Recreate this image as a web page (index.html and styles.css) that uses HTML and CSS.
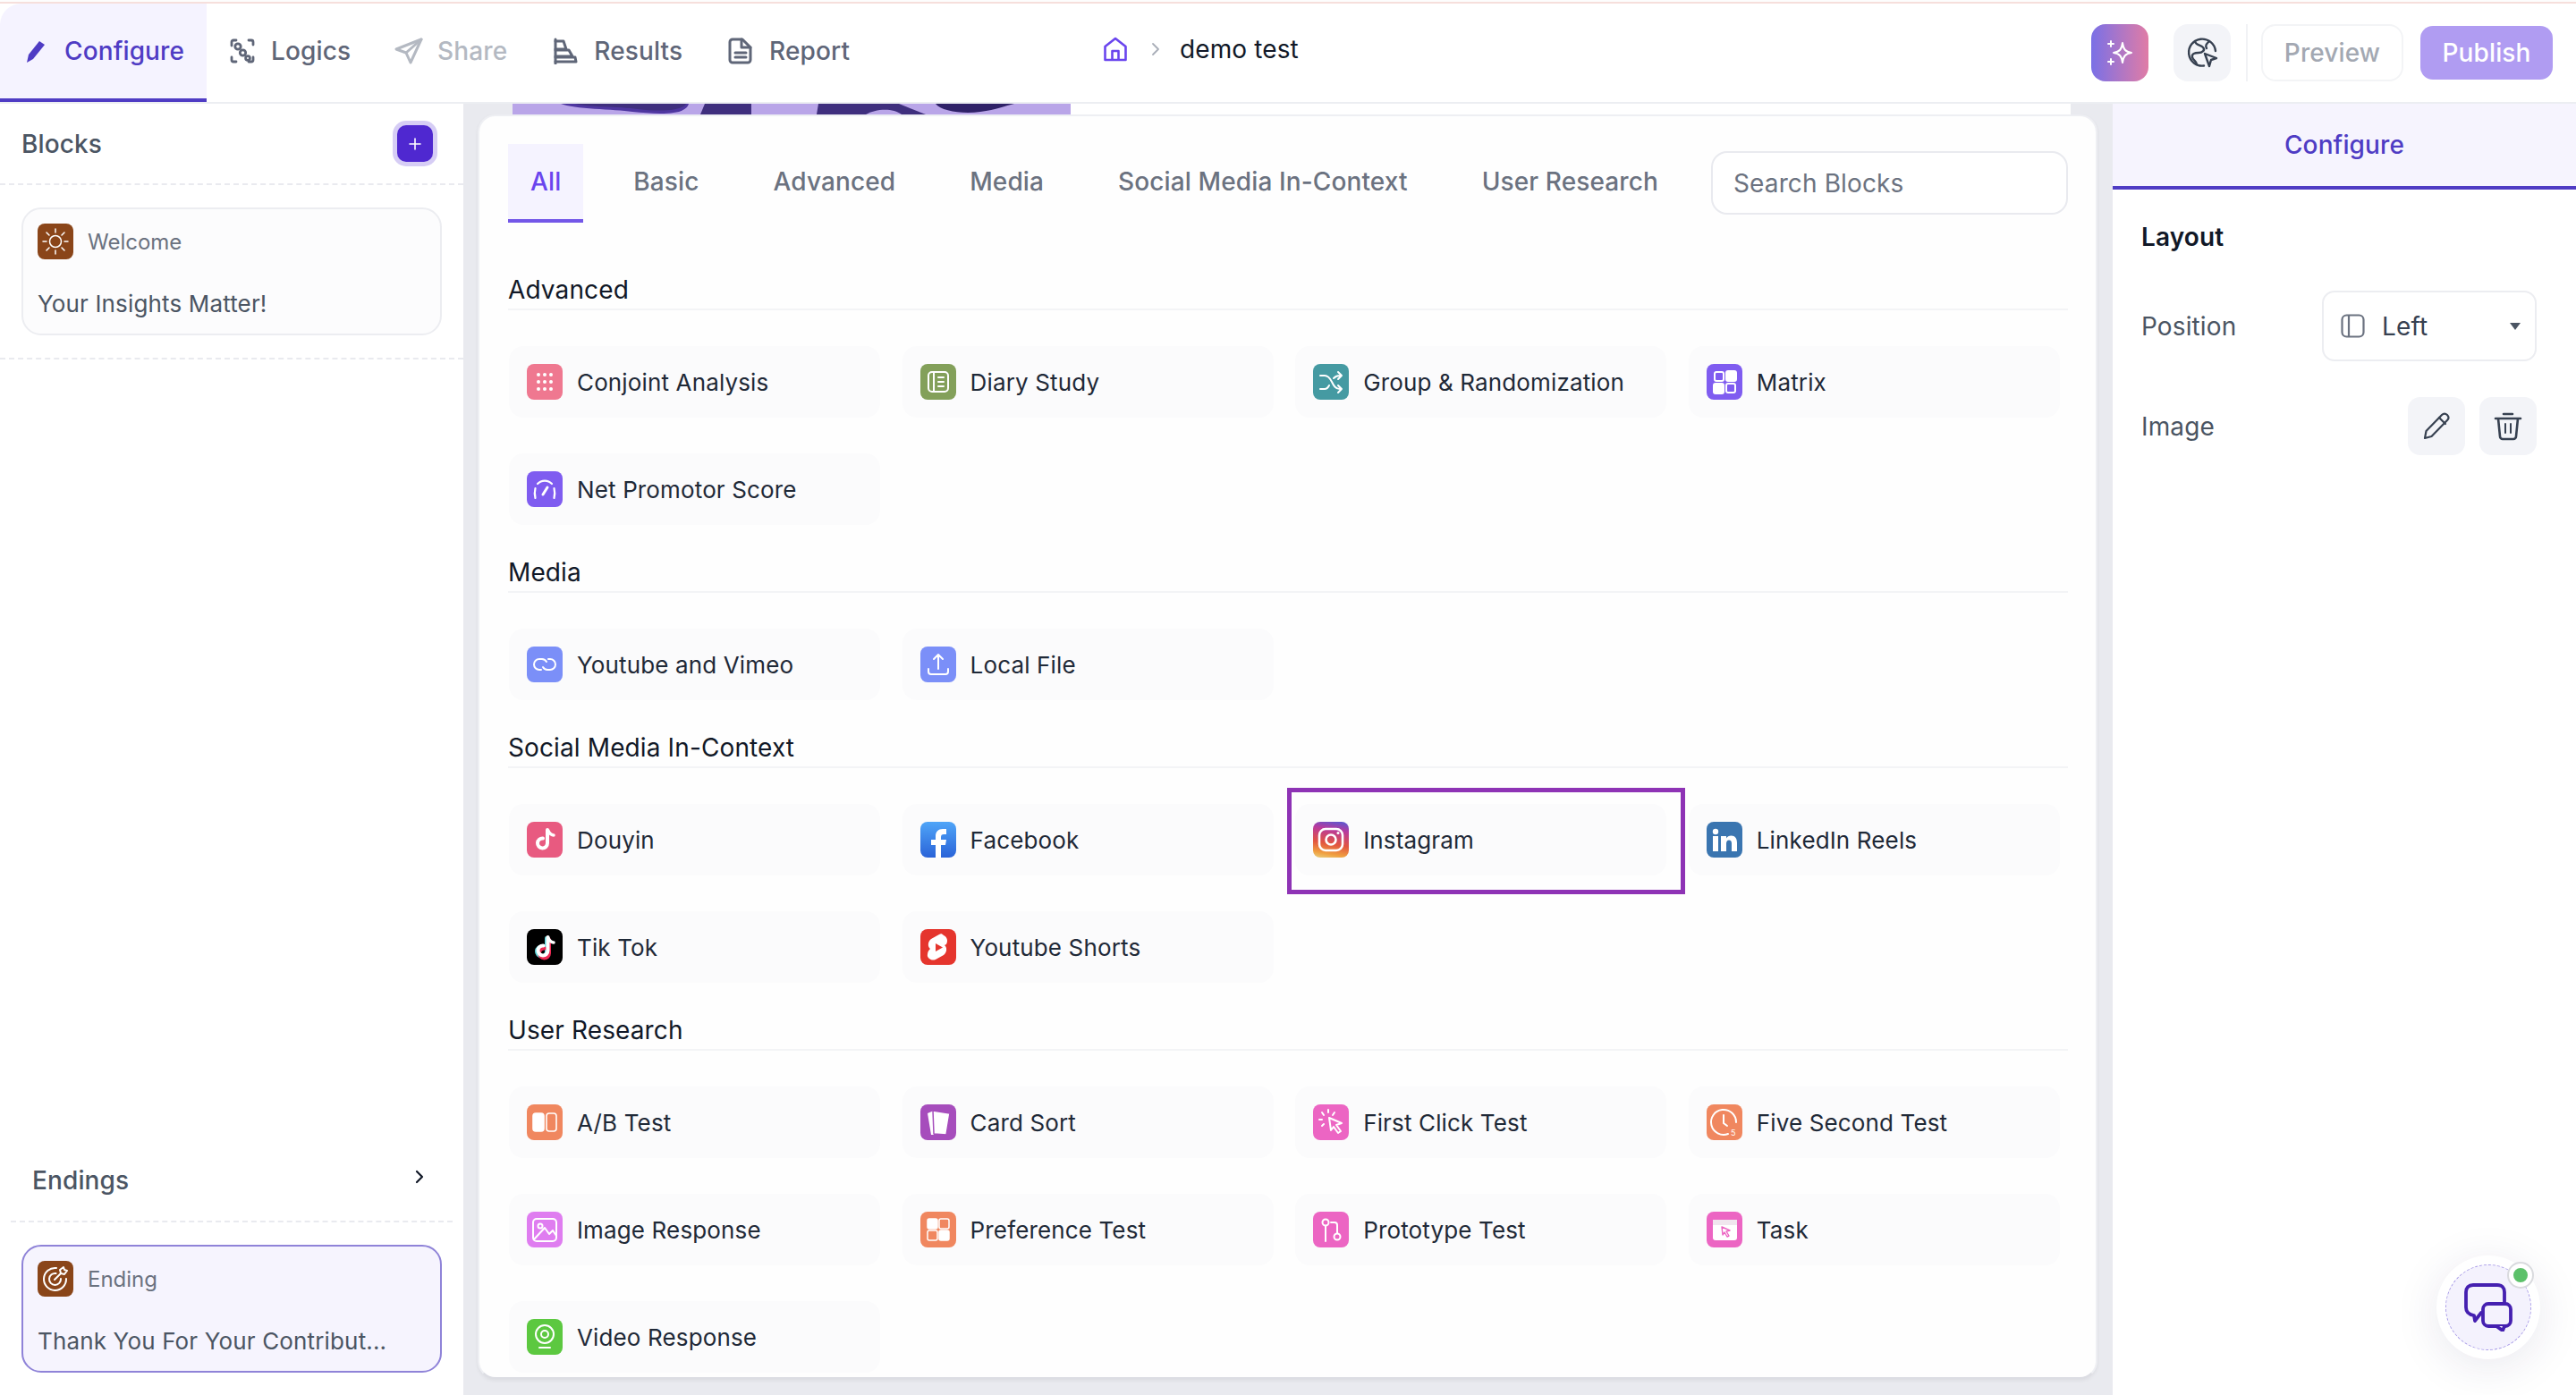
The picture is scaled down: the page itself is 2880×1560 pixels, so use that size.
FILE: index.html
```html
<!DOCTYPE html>
<html lang="en">
<head>
<meta charset="utf-8">
<title>demo test</title>
<link rel="stylesheet" href="styles.css">
</head>
<body>
<div class="app">
  <div class="topline"></div>
  <header class="header">
    <nav class="nav">
      <a class="nav-tab active"><svg class="nav-ic" viewBox="0 0 28 28"><path d="M3 27l2-9L17 3l6 4L10 23z" fill="#4f3cc4"/></svg>Configure</a>
      <a class="nav-tab"><svg class="nav-ic" viewBox="0 0 28 28" fill="none" stroke="#5f6678" stroke-width="2.800" stroke-linecap="round" stroke-linejoin="round"><path d="M2 8V4a2 2 0 0 1 2-2h3M21 2h3a2 2 0 0 1 2 2v3M26 21v3a2 2 0 0 1-2 2h-3M7 26H4a2 2 0 0 1-2-2v-3"/><circle cx="9" cy="9" r="3.200"/><circle cx="14.500" cy="16" r="3.200"/><circle cx="20" cy="22" r="2.400"/></svg>Logics</a>
      <a class="nav-tab disabled"><svg class="nav-ic wide" viewBox="0 0 32 30" fill="none" stroke="#b4b9c2" stroke-width="3" stroke-linejoin="round" stroke-linecap="round"><path d="M30 2L2 13l11 4 5 11z"/><path d="M30 2L13 17"/></svg>Share</a>
      <a class="nav-tab"><svg class="nav-ic" viewBox="0 0 28 30" fill="none" stroke="#5f6678" stroke-width="3" stroke-linejoin="round" stroke-linecap="round"><path d="M3 2v27"/><path d="M3 4h9l3 9H3M3 14h15l4 7H3M3 22h22l1 5H3"/></svg>Results</a>
      <a class="nav-tab"><svg class="nav-ic" viewBox="0 0 28 30" fill="none" stroke="#5f6678" stroke-width="3" stroke-linejoin="round" stroke-linecap="round"><path d="M5 2h11l9 9v14a3 3 0 0 1-3 3H5a3 3 0 0 1-3-3V5a3 3 0 0 1 3-3z"/><path d="M15 2v9h10M8 17h12M8 22h12"/></svg>Report</a>
    </nav>
    <div class="crumb">
      <svg class="home" viewBox="0 0 28 28" fill="none" stroke="#6a45ee" stroke-width="2.600" stroke-linejoin="round"><path d="M2.500 26V11L14 2l11.500 9v15z"/><path d="M10.500 26V16h7v10"/></svg>
      <svg class="crumb-sep" viewBox="0 0 10 16" fill="none" stroke="#a9aeb8" stroke-width="1.800" stroke-linecap="round" stroke-linejoin="round"><path d="M2 2l6 6-6 6"/></svg>
      <span class="crumb-text">demo test</span>
    </div>
    <div class="actions">
      <button class="icon-btn ai"><svg viewBox="0 0 32 32" width="32" height="32" fill="none" stroke="#fff" stroke-width="2" stroke-linejoin="round" stroke-linecap="round"><path d="M19 5c1 7 3 10 10 11-7 1-9 4-10 11-1-7-3-10-10-11 7-1 9-4 10-11z"/><path d="M6 3v6M3 6h6M6 23v6M3 26h6"/></svg></button>
      <button class="icon-btn"><svg viewBox="0 0 36 36" width="36" height="36" fill="none" stroke="#374151" stroke-width="2.400" stroke-linejoin="round" stroke-linecap="round"><path d="M20 32.500A15 15 0 1 1 33 16"/><path d="M10 5c1 5 6 4 9 7s-1 6-5 6-8 1-7 5 5 4 5 8M26 5c-3 3-5 5-3 8"/><path d="M21 19l13 5-6 2-2 7z" fill="#f3f4f8"/></svg></button>
      <span class="divider"></span>
      <button class="preview-btn">Preview</button>
      <button class="publish-btn">Publish</button>
    </div>
  </header>

  <main class="main">
    <aside class="left">
      <div class="left-head">
        <span class="left-title">Blocks</span>
        <button class="add-btn"><svg viewBox="0 0 14 14" width="14" height="14" stroke="#fff" stroke-width="1.600" stroke-linecap="round"><path d="M7 1v12M1 7h12"/></svg></button>
      </div>
      <div class="block-wrap">
        <div class="block">
          <div class="block-top">
            <span class="ic brown"><svg viewBox="0 0 40 40" fill="none" stroke="#fff" stroke-width="1.500" stroke-linecap="round"><circle cx="20" cy="20" r="6.500"/><path d="M20 6v4M20 30v4M6 20h4M30 20h4M10 10l3 3M27 27l3 3M30 10l-3 3M13 27l-3 3"/></svg></span>
            <span class="block-kind">Welcome</span>
          </div>
          <div class="block-title">Your Insights Matter!</div>
        </div>
      </div>
      <div class="left-spacer"></div>
      <div class="endings-head">
        <span class="left-title">Endings</span>
        <svg class="endings-chev" viewBox="0 0 12 16" fill="none" stroke="#111827" stroke-width="2.200" stroke-linecap="round" stroke-linejoin="round"><path d="M3 2l6 6-6 6"/></svg>
      </div>
      <div class="block selected">
        <div class="block-top">
          <span class="ic brown"><svg viewBox="0 0 40 40" fill="none" stroke="#fff" stroke-width="2" stroke-linecap="round" stroke-linejoin="round"><path d="M21 8a12.500 12.500 0 1 0 11 12"/><path d="M20.500 14a6.500 6.500 0 1 0 5.500 6"/><path d="M19 21l7-7M26 14l-1-4 4-3 1 3 3 1-3 4z"/></svg></span>
          <span class="block-kind">Ending</span>
        </div>
        <div class="block-title">Thank You For Your Contribut...</div>
      </div>
    </aside>

    <section class="center">
      <div class="peek">
        <svg class="peek-img" viewBox="0 0 624 12" preserveAspectRatio="none">
          <rect width="624" height="12" fill="#b9a5e8"/>
          <path d="M54 0c14 6 60 6 80 9 30 3 60 4 63-9z" fill="#4e36a0"/>
          <path d="M70 0c14 4 50 3 70 6 25 3 50 2 54-6z" fill="#3f2f7e"/>
          <path d="M210 12l5-12h52v12z" fill="#3f2f7e"/>
          <path d="M340 12l2-12h90l30 12z" fill="#3f2f7e"/>
          <path d="M395 12c10-6 30-8 40 0z" fill="#b9a5e8"/>
          <path d="M473 0c6 8 30 12 50 9 18-2 28-7 38-9z" fill="#2f2168"/>
        </svg>
      </div>
      <div class="card">
        <div class="tabs-row">
          <div class="tabs">
            <a class="tab active">All</a>
            <a class="tab">Basic</a>
            <a class="tab">Advanced</a>
            <a class="tab">Media</a>
            <a class="tab">Social Media In-Context</a>
            <a class="tab">User Research</a>
          </div>
          <div class="search">Search Blocks</div>
        </div>

        <div class="sec first">
          <h3 class="sec-title">Advanced</h3>
          <div class="grid">
            <div class="item"><span class="ic pink"><svg viewBox="0 0 40 40" fill="#fff"><circle cx="13" cy="12" r="2"/><circle cx="20" cy="12" r="2"/><circle cx="27" cy="12" r="2"/><circle cx="13" cy="20" r="2"/><circle cx="20" cy="20" r="2"/><circle cx="27" cy="20" r="2"/><circle cx="13" cy="28" r="2"/><circle cx="20" cy="28" r="2"/><circle cx="27" cy="28" r="2"/></svg></span>Conjoint Analysis</div>
            <div class="item"><span class="ic olive"><svg viewBox="0 0 40 40" fill="none" stroke="#fff" stroke-width="2" stroke-linejoin="round" stroke-linecap="round"><rect x="9" y="9" width="22" height="22" rx="4"/><path d="M15 9v22M20 15h6M20 20h6M20 25h6"/></svg></span>Diary Study</div>
            <div class="item"><span class="ic teal"><svg viewBox="0 0 40 40" fill="none" stroke="#fff" stroke-width="2" stroke-linejoin="round" stroke-linecap="round"><path d="M8 13h5c4 0 6 3 8 7s4 8 9 8h2M8 28h5c2 0 4-2 5-4M23 16c2-2 4-3 7-3h2M28 9l4 4-4 4M28 24l4 4-4 4"/></svg></span>Group &amp; Randomization</div>
            <div class="item"><span class="ic violet"><svg viewBox="0 0 40 40" fill="none" stroke="#fff" stroke-width="2"><rect x="9" y="9" width="10" height="10" rx="2"/><rect x="22" y="8" width="11" height="11" rx="2" fill="#fff"/><rect x="8" y="22" width="11" height="11" rx="2" fill="#fff"/><rect x="22" y="22" width="10" height="10" rx="2"/></svg></span>Matrix</div>
            <div class="item"><span class="ic violet"><svg viewBox="0 0 40 40" fill="none" stroke="#fff" stroke-width="2.200" stroke-linecap="round"><path d="M12 14a11 11 0 0 1 16 0M9.500 19c-1 4-1 7 0 11M30.500 19c1 4 1 7 0 11"/><path d="M18 26l5-8" stroke-width="3"/></svg></span>Net Promotor Score</div>
          </div>
        </div>

        <div class="sec">
          <h3 class="sec-title">Media</h3>
          <div class="grid">
            <div class="item"><span class="ic blue"><svg viewBox="0 0 40 40" fill="none" stroke="#fff" stroke-width="2" stroke-linecap="round"><path d="M22 17a6 6 0 0 0-5-3h-3a6 6 0 0 0 0 12h2"/><path d="M18 23a6 6 0 0 0 5 3h3a6 6 0 0 0 0-12h-2"/></svg></span>Youtube and Vimeo</div>
            <div class="item"><span class="ic blue"><svg viewBox="0 0 40 40" fill="none" stroke="#fff" stroke-width="2" stroke-linecap="round" stroke-linejoin="round"><path d="M20 25V9M15 14l5-5 5 5M9 25v3a3 3 0 0 0 3 3h16a3 3 0 0 0 3-3v-3"/></svg></span>Local File</div>
          </div>
        </div>

        <div class="sec">
          <h3 class="sec-title">Social Media In-Context</h3>
          <div class="grid">
            <div class="item"><span class="ic douyin"><svg viewBox="0 0 40 40" fill="none" stroke="#fff" stroke-width="4" stroke-linecap="round"><path d="M23 9v15a5.500 5.500 0 1 1-5-5.500"/><path d="M24 10c1 3 4 5 6 5" stroke-width="3.500"/></svg></span>Douyin</div>
            <div class="item"><span class="ic fb"><svg viewBox="0 0 40 40"><path d="M17 40V26h-5v-6h5v-4c0-5 3-8 8-8h4v6h-3c-2 0-3 1-3 3v3h6l-1 6h-5v14z" fill="#fff"/></svg></span>Facebook</div>
            <div class="item"><span class="ic ig"><svg viewBox="0 0 40 40" fill="none" stroke="#fff" stroke-width="2.600"><rect x="7" y="8" width="26" height="24" rx="7"/><circle cx="20" cy="20" r="5.500"/><circle cx="28" cy="12.500" r="1.500" fill="#fff" stroke="none"/></svg></span>Instagram</div>
            <div class="item"><span class="ic li"><svg viewBox="0 0 40 40" fill="#fff"><circle cx="10" cy="11" r="3.200"/><rect x="7" y="16" width="6" height="17"/><path d="M16 16h6v2.500c1-1.800 3-3 5.500-3 4.500 0 6.500 3 6.500 8V33h-6v-8.500c0-2.500-.8-4-3-4s-3 1.700-3 4V33h-6z"/></svg></span>LinkedIn Reels</div>
            <div class="item"><span class="ic tt"><svg viewBox="0 0 40 40" fill="none" stroke-width="4" stroke-linecap="round"><path d="M22 10v15a5.500 5.500 0 1 1-5-5.500" stroke="#5fd6dc"/><path d="M25 12v15a5.500 5.500 0 1 1-5-5.500" stroke="#ee2a54"/><path d="M23.500 9v15a5.500 5.500 0 1 1-5-5.500" stroke="#fff"/><path d="M24 10c1 3 4 5 6 5" stroke="#fff" stroke-width="3.500"/></svg></span>Tik Tok</div>
            <div class="item"><span class="ic yt"><svg viewBox="0 0 40 40"><path d="M26 7c4 2 5 6 3 10l-2 1c3 2 3 8-1 11l-9 5c-5 2-10-2-9-6 0-3 2-5 3-6-3-2-3-8 1-11l9-5c2-1 3-1 5 1z" fill="#fff"/><path d="M17 16l8 4.500-8 4.500z" fill="#e5352d"/></svg></span>Youtube Shorts</div>
          </div>
        </div>

        <div class="sec">
          <h3 class="sec-title">User Research</h3>
          <div class="grid">
            <div class="item"><span class="ic coral"><svg viewBox="0 0 40 40" fill="none" stroke="#fff" stroke-width="1.600"><rect x="7" y="10" width="12" height="20" rx="3" fill="#fff"/><rect x="22" y="10" width="11" height="20" rx="3"/></svg></span>A/B Test</div>
            <div class="item"><span class="ic purple"><svg viewBox="0 0 40 40"><path d="M8 10l7-3 0 27-3 0z" fill="#fff"/><path d="M14 7l19 3-4 24-14-1z" fill="#fff" stroke="#a64dbc" stroke-width="1.500" stroke-linejoin="round"/></svg></span>Card Sort</div>
            <div class="item"><span class="ic rose"><svg viewBox="0 0 40 40" fill="none" stroke="#fff" stroke-width="2" stroke-linejoin="round" stroke-linecap="round"><path d="M18 15l14 6-6 2 5 7-3 2-5-7-3 4z"/><path d="M17 6v3M10 9l2 3M7 17h3M10 24l2-2M24 9l-2 3"/></svg></span>First Click Test</div>
            <div class="item"><span class="ic coral"><svg viewBox="0 0 40 40" fill="none" stroke="#fff" stroke-width="2" stroke-linecap="round"><path d="M24 33a14 14 0 1 1 9-13"/><path d="M19 12v9l4 3"/><text class="five" x="27" y="35">5</text></svg></span>Five Second Test</div>
            <div class="item"><span class="ic orchid"><svg viewBox="0 0 40 40" fill="none" stroke="#fff" stroke-width="2" stroke-linejoin="round"><rect x="7" y="8" width="26" height="25" rx="4"/><circle cx="15" cy="16" r="2.500"/><path d="M8 31l12-13 5 7 4-4 4 6"/></svg></span>Image Response</div>
            <div class="item"><span class="ic coral"><svg viewBox="0 0 40 40" fill="none" stroke="#fff" stroke-width="1.500"><rect x="8" y="8" width="11" height="11" rx="2" fill="#fff"/><rect x="21" y="8" width="11" height="11" rx="2"/><rect x="8" y="21" width="11" height="11" rx="2"/><rect x="21" y="21" width="11" height="11" rx="2" fill="#fff"/></svg></span>Preference Test</div>
            <div class="item"><span class="ic rose"><svg viewBox="0 0 40 40" fill="none" stroke="#fff" stroke-width="2" stroke-linecap="round"><circle cx="14" cy="12" r="3.500"/><circle cx="27" cy="28" r="3.500"/><path d="M14 16v17M20 12h4a3 3 0 0 1 3 3v9"/></svg></span>Prototype Test</div>
            <div class="item"><span class="ic rose"><svg viewBox="0 0 40 40"><rect x="7" y="9" width="27" height="23" rx="3" fill="#fff"/><rect x="7" y="9" width="27" height="6" fill="#f0e6ee"/><path d="M17 17l9 4-4 1 3 5-2 1-3-5-2 3z" fill="none" stroke="#ec65c3" stroke-width="1.400" stroke-linejoin="round"/></svg></span>Task</div>
            <div class="item"><span class="ic green"><svg viewBox="0 0 40 40" fill="none" stroke="#fff" stroke-width="2" stroke-linecap="round"><circle cx="20" cy="17" r="10"/><circle cx="20" cy="17" r="4"/><path d="M14 32h12"/></svg></span>Video Response</div>
          </div>
        </div>
      </div>
      <div class="highlight"></div>
    </section>

    <aside class="right">
      <div class="right-tab">Configure</div>
      <div class="right-body">
        <div class="right-head">Layout</div>
        <div class="row">
          <span class="row-label">Position</span>
          <div class="select">
            <svg viewBox="0 0 27 27" width="27" height="27" fill="none" stroke="#6b7280" stroke-width="2.200"><rect x="1.500" y="1.500" width="24" height="24" rx="5"/><path d="M9 1.500v24"/></svg>
            <span class="select-val">Left</span>
            <svg class="caret" viewBox="0 0 12 8" width="12" height="8"><path d="M0 0h12L6 8z" fill="#4b5563"/></svg>
          </div>
        </div>
        <div class="row image-row">
          <span class="row-label">Image</span>
          <div class="btn-pair">
            <button class="soft-btn"><svg viewBox="0 0 34 34" width="34" height="34" fill="none" stroke="#374151" stroke-width="2.200" stroke-linejoin="round" stroke-linecap="round"><path d="M4 30l1.500-8L23 4c2-2 4-2 6 0s2 4 0 6L11.500 28z"/><path d="M20 7l7 7"/></svg></button>
            <button class="soft-btn"><svg viewBox="0 0 34 34" width="34" height="34" fill="none" stroke="#374151" stroke-width="2.600" stroke-linejoin="round" stroke-linecap="round"><path d="M3 8h28M12 3h10M6 8l2 20a3 3 0 0 0 3 3h12a3 3 0 0 0 3-3l2-20"/><path d="M14 14v10M20 14v10" stroke-width="2"/></svg></button>
          </div>
        </div>
      </div>
      <div class="chat">
        <div class="chat-inner">
          <svg viewBox="0 0 54 54" width="54" height="54" fill="none" stroke="#4520b0" stroke-width="3.800" stroke-linejoin="round" stroke-linecap="round"><path d="M19 33L12 42 11 36C5 35 2 32 2 27V10C2 5 5 2 10 2H37C42 2 45 5 45 10V22"/><rect x="21" y="23" width="31" height="25" rx="6" fill="#f4f2fd"/><path d="M36 48l7 5 2-5" fill="#f4f2fd"/></svg>
        </div>
        <span class="chat-dot"></span>
      </div>
    </aside>
  </main>
</div>
</body>
</html>
```

FILE: styles.css
```css
* { box-sizing: border-box; }
html, body { margin: 0; padding: 0; }
body {
  width: 2880px;
  height: 1560px;
  overflow: hidden;
  background: #fff;
  font-family: "Inter", "Liberation Sans", sans-serif;
  color: #1f2937;
  letter-spacing: .12px;
}
button { font-family: inherit; letter-spacing: inherit; border: 0; padding: 0; }
h3 { margin: 0; }

.app { display: flex; flex-direction: column; height: 1560px; }
.topline { height: 4px; border-top: 2px solid #fdfdfd; background: #f6dfdc; flex: none; }

/* header */
.header {
  height: 112px;
  flex: none;
  display: flex;
  align-items: stretch;
  border-bottom: 2px solid #eceef2;
  position: relative;
}
.nav { display: flex; align-items: stretch; width: 1233px; flex: none; }
.nav-tab {
  display: flex;
  align-items: center;
  gap: 18px;
  font-size: 28px;
  font-weight: 500;
  color: #5f6678;
  padding: 0 25px 0 26px;
  height: 110px;
  border-bottom: 4px solid transparent;
}
.nav-tab.active {
  background: #f5f3ff;
  color: #4f3cc4;
  border-bottom-color: #4f3cc4;
  border-top-left-radius: 24px;
  padding: 0 20px 0 27px;
  gap: 17px;
  width: 231px;
}
.nav-tab.disabled { color: #b4b9c2; gap: 16px; padding: 0 25px 0 24px; }
.nav-ic { width: 28px; height: 30px; flex: none; }
.nav-ic.wide { width: 32px; }

.crumb { display: flex; align-items: center; gap: 0; height: 102px; flex: none; width: 1105px; }
.home { width: 28px; height: 28px; flex: none; }
.crumb-sep { width: 10px; height: 16px; margin: 0 22px 0 26px; flex: none; }
.crumb-text { font-size: 28px; color: #111827; }

.actions { display: flex; align-items: center; height: 110px; flex: none; }
.icon-btn {
  width: 64px; height: 64px; border-radius: 16px;
  background: #f3f4f8;
  display: flex; align-items: center; justify-content: center;
  margin-right: 28px;
}
.icon-btn.ai { background: linear-gradient(90deg, #7a70e6, #e07ca6); }
.icon-btn + .divider { margin-left: -11px; }
.divider { width: 2px; height: 64px; background: #f1f2f5; margin-right: 15px; }
.preview-btn {
  width: 159px; height: 64px; border-radius: 16px;
  background: #fff; border: 2px solid #f3f4f6;
  color: #a3a8b2; font-size: 28px; font-weight: 500;
  margin-right: 19px;
}
.publish-btn {
  width: 148px; height: 60px; border-radius: 14px;
  background: #b09cf2; color: #fff; font-size: 28px; font-weight: 500;
}

/* main */
.main { flex: 1; display: flex; min-height: 0; background: #e9eaef; }

.left {
  width: 518px; flex: none; background: #fff;
  display: flex; flex-direction: column;
  padding-bottom: 25px;
}
.left-head {
  height: 91px; flex: none;
  display: flex; align-items: center; justify-content: space-between;
  padding: 0 29px 0 24px;
  border-bottom: 2px dashed #e9eaef;
}
.left-title { font-size: 28px; font-weight: 500; color: #4b5563; }
.add-btn {
  width: 40px; height: 41px; border-radius: 10px;
  background: #4f28d0;
  box-shadow: 0 0 0 5px #d6cdf5;
  display: flex; align-items: center; justify-content: center;
  margin-right: 5px;
}
.block-wrap { padding: 25px 24px; border-bottom: 2px dashed #e9eaef; flex: none; }
.left-spacer { flex: 1; }
.block {
  height: 143px;
  width: 470px;
  flex: none;
  background: #fcfcfd;
  border: 2px solid #ecedf1;
  border-radius: 22px;
  padding: 16px 16px;
}
.block.selected {
  background: #f6f4fe;
  border-color: #8f83d8;
  margin-left: 24px;
}
.block-top { display: flex; align-items: center; gap: 16px; }
.block-kind { font-size: 24px; color: #6b7280; letter-spacing: 0; }
.block-title { font-size: 26px; color: #4b5563; margin-top: 34px; line-height: 32px; white-space: nowrap; letter-spacing: .15px; }

.endings-head {
  height: 75px; flex: none;
  margin: 0 12px 25px;
  padding: 0 31px 18px 24px;
  display: flex; align-items: center; justify-content: space-between;
  border-bottom: 2px dashed #e9eaef;
}
.endings-chev { width: 12px; height: 16px; margin-bottom: 8px; }

.ic {
  width: 40px; height: 40px; flex: none;
  border-radius: 8px; overflow: hidden; display: block;
}
.ic svg { display: block; width: 40px; height: 40px; }
.brown { background: #8a4519; }
.pink { background: #ef7890; }
.olive { background: #83a05a; }
.teal { background: #459aa2; }
.violet { background: #7f5cf0; }
.blue { background: #7b8ff8; }
.douyin { background: #e85a80; }
.fb { background: linear-gradient(180deg, #4fa5f8, #2a63d8); }
.ig { background: linear-gradient(190deg, #4f5bd5 0%, #b83a9e 25%, #e2553f 60%, #f0a040 85%, #e8d080 100%); }
.li { background: #3a75b0; }
.tt { background: #000; }
.yt { background: #e5352d; }
.coral { background: #f0875f; }
.purple { background: #a64dbc; }
.rose { background: #ec65c3; }
.orchid { background: #df7df0; }
.green { background: #5cc840; }
.five { font-family: "Inter", sans-serif; font-size: 9px; fill: #fff; stroke: none; }

/* center */
.center {
  flex: 1;
  min-width: 0;
  padding: 0 17px 0 16px;
  display: flex; flex-direction: column;
  position: relative;
}
.peek { height: 12px; flex: none; margin: 0 30px 0 39px; background: #fff; display: flex; }
.peek-img { width: 624px; height: 12px; display: block; flex: none; }
.card {
  height: 1414px;
  flex: none;
  background: #fefefe;
  border-radius: 20px;
  border: 2px solid #eeeff3;
  border-bottom-color: #dcdde3;
  box-shadow: 0 2px 4px rgba(0,0,0,.06);
  padding: 31px 31px 0 33px;
  overflow: hidden;
}
.tabs-row { display: flex; justify-content: space-between; height: 88px; margin-left: -1px; }
.tabs { display: flex; gap: 33px; }
.tab {
  height: 88px;
  padding: 0 25px;
  font-size: 28px; font-weight: 500; color: #6b7280;
  display: flex; align-items: center;
  border-bottom: 4px solid transparent;
}
.tab.active { background: #f5f3ff; color: #6a45ee; border-bottom-color: #7357e8; margin-right: -2px; }
.search {
  width: 399px; height: 71px;
  margin-top: 8px;
  border: 2px solid #e9eaef;
  border-radius: 18px;
  background: #fff;
  padding: 0 23px;
  display: flex; align-items: center;
  font-size: 28px; color: #6b7280;
}

.sec { margin-top: 32px; }
.sec.first { margin-top: 54px; }
.sec-title {
  height: 44px;
  line-height: 42px;
  font-size: 28px; font-weight: 400;
  color: #111827;
  border-bottom: 2px solid #f3f4f6;
  margin-left: -1px;
}
.grid {
  margin-top: 40px;
  display: grid;
  grid-template-columns: repeat(4, 415px);
  column-gap: 24.6px;
  row-gap: 40px;
}
.item {
  height: 80px;
  background: #fbfbfc;
  border-radius: 16px;
  padding-left: 20px;
  display: flex; align-items: center; gap: 16px;
  font-size: 26px; color: #1f2937;
  white-space: nowrap;
  letter-spacing: .14px;
}

.highlight {
  position: absolute;
  left: 921px; top: 765px;
  width: 445px; height: 119px;
  border: 5px solid #8e33b5;
  pointer-events: none;
}

/* right */
.right { width: 518px; flex: none; background: #fff; position: relative; }
.right-tab {
  height: 96px;
  background: #f6f4fe;
  border-bottom: 4px solid #4f3cc4;
  color: #4f3cc4;
  font-size: 28px; font-weight: 500;
  display: flex; align-items: center; justify-content: center;
}
.right-body { padding: 0 44px 0 32px; }
.right-head { font-size: 28px; font-weight: 600; color: #111827; margin-top: 36px; line-height: 34px; }
.row { display: flex; align-items: center; justify-content: space-between; margin-top: 43px; }
.image-row { margin-top: 40px; }
.row-label { font-size: 28px; color: #4b5563; }
.select {
  width: 240px; height: 79px;
  border: 2px solid #ecedf1;
  border-radius: 14px;
  padding: 0 16px 0 19px;
  display: flex; align-items: center; gap: 19px;
}
.select-val { font-size: 28px; color: #374151; flex: 1; }
.caret { flex: none; }
.btn-pair { display: flex; gap: 16px; }
.soft-btn {
  width: 64px; height: 65px; border-radius: 14px;
  background: #f3f4f8;
  display: flex; align-items: center; justify-content: center;
}

.chat {
  position: absolute;
  left: 362px; top: 1288px;
  width: 116px; height: 116px;
  border-radius: 50%;
  background: #fff;
  box-shadow: 0 8px 50px rgba(40,30,90,.10);
  display: flex; align-items: center; justify-content: center;
}
.chat-inner {
  width: 96px; height: 96px;
  border-radius: 50%;
  background: #f4f2fd;
  border: 1px dashed #a89be8;
  display: flex; align-items: center; justify-content: center;
}
.chat-dot {
  position: absolute;
  left: 81px; top: 9px;
  width: 26px; height: 26px;
  border-radius: 50%;
  background: #5cc16a;
  border: 5px solid #fff;
  box-shadow: 0 0 0 2px #d9dade;
}
```
